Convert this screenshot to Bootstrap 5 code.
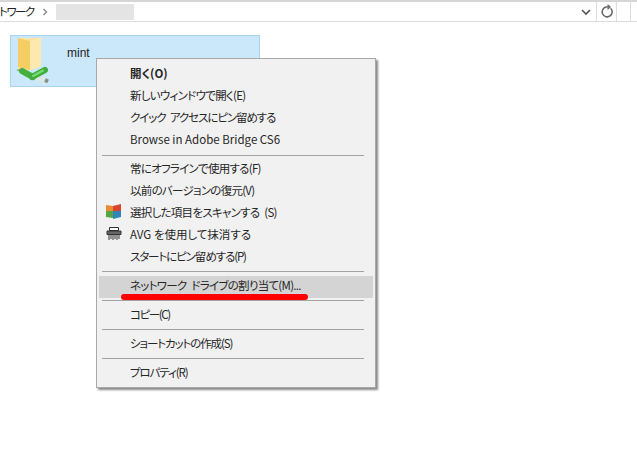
<!DOCTYPE html>
<html lang="ja">
<head>
<meta charset="utf-8">
<title>ネットワーク</title>
<link href="https://cdn.jsdelivr.net/npm/bootstrap@5.3.0/dist/css/bootstrap.min.css" rel="stylesheet">
<style>
html,body{height:100%;overflow:hidden;background:#fff;}
body{font-family:"Noto Sans CJK JP","Liberation Sans",sans-serif;font-feature-settings:"palt";font-size:12px;color:#222;position:relative;}
.addr-bar{height:22px;border-top:2px solid #d6d6d6;border-bottom:1px solid #dcdcdc;}
.crumb-text{margin-left:-1px;font-size:11.5px;letter-spacing:-1.5px;line-height:1;color:#222;}
.crumb-sep{margin:0 7px 0 8px;line-height:0;}
.crumb-mask{width:78px;height:16px;background:#e4e4e4;}
.addr-end{width:21px;border-left:1px solid #dcdcdc;border-right:1px solid #dcdcdc;}
.addr-tail{width:13px;}
.addr-next{width:7px;border-left:1px solid #dcdcdc;}
.chev{width:16px;margin-right:0;line-height:0;}
.tile{width:250px;height:52px;margin:13px 0 0 10px;background:#cbe8fb;border:1px solid #a9d3ee;}
.tile-ico{width:46px;margin-left:5px;line-height:0;}
.tile-name{margin:-16px 0 0 5px;font-family:"Liberation Sans",sans-serif;font-size:12px;color:#222;line-height:1;}
.ctx{position:absolute;left:96px;top:58px;width:280px;height:330px;background:#f1f1f1;border:1px solid #a8a8a8;box-shadow:2px 2px 2px #8a8a8a;padding:3px 2px;}
.ctx-item{height:22px;padding-left:31px;line-height:22px;white-space:nowrap;color:#262626;font-size:11.5px;position:relative;word-spacing:3px;}
.ctx-item b{font-weight:700;}
.ctx-latin{word-spacing:0;}
.ctx-snug{letter-spacing:-.72px;}
.ctx-kana{letter-spacing:-1.1px;}
.ctx-kana2{letter-spacing:-1.4px;}
.ctx-rule{height:1px;background:#a2a2a2;margin:4px 9px 2px 3px;}
.ctx-first{margin:5px 9px 1px 3px;}
.ctx-before-hot{margin:4px 9px 4px 3px;}
.ctx-after-hot{margin:2px 9px 2px 3px;}
.ctx-hot{background:#d4d4d4;line-height:19px;}
.ctx-ico{position:absolute;left:7px;top:3px;line-height:0;letter-spacing:0;}
.red-mark{position:absolute;left:121px;top:294px;width:187px;height:6px;border-radius:3px;background:#f00;}
</style>
</head>
<body>
<div class="addr-bar d-flex align-items-center">
  <span class="crumb-text">トワーク</span>
  <span class="crumb-sep"><svg width="7" height="8" viewBox="0 0 7 8"><path d="M1.5 1l3 3-3 3" fill="none" stroke="#8a8a8a" stroke-width="1.4"/></svg></span>
  <span class="crumb-mask"></span>
  <span class="flex-grow-1"></span>
  <span class="chev"><svg width="12" height="8" viewBox="0 0 12 8"><path d="M2 2l4 4 4-4" fill="none" stroke="#555" stroke-width="1.6"/></svg></span>
  <span class="addr-end h-100 d-flex align-items-center justify-content-center"><svg width="14" height="15" viewBox="0 0 14 15"><path d="M10.600 4.200A5 5 0 1 1 6 3H9" fill="none" stroke="#666" stroke-width="1.5"/><path d="M7.500 .8 10 3 7.500 5.200" fill="none" stroke="#666" stroke-width="1.3"/></svg></span>
  <span class="addr-tail"></span>
  <span class="addr-next h-100"></span>
</div>
<div class="tile d-flex align-items-center">
  <span class="tile-ico"><svg width="46" height="46" viewBox="0 0 46 46">
    <path d="M2 0h23v28l-10 4H2z" fill="#fbe3a2"/>
    <path d="M2 0l12 3v29l-12-3z" fill="#f6cd63"/>
    <path d="M14 3l11-3v28l-11 4z" fill="#fde9b0"/>
    <path d="M17 38l13 5" stroke="#dfe6e2" stroke-width="5" stroke-linecap="round"/>
    <path d="M29 42l3 1.500" stroke="#7f8f8a" stroke-width="4"/>
    <path d="M1 32l5 .5" stroke="#8fb89a" stroke-width="2"/>
    <path d="M6 33l11 6" stroke="#45b03f" stroke-width="6" stroke-linecap="round"/>
    <path d="M16 39l13-7" stroke="#3fae3d" stroke-width="6" stroke-linecap="round"/>
    <path d="M17 38l10-5.500" stroke="#79dc6e" stroke-width="2" stroke-linecap="round"/>
  </svg></span>
  <span class="tile-name">mint</span>
</div>
<div class="ctx">
  <div class="ctx-item"><b>開く(O)</b></div>
  <div class="ctx-item ctx-snug">新しいウィンドウで開く(E)</div>
  <div class="ctx-item ctx-kana">クイック アクセスにピン留めする</div>
  <div class="ctx-item ctx-latin">Browse in Adobe Bridge CS6</div>
  <div class="ctx-rule ctx-first"></div>
  <div class="ctx-item ctx-snug">常にオフラインで使用する(F)</div>
  <div class="ctx-item ctx-snug">以前のバージョンの復元(V)</div>
  <div class="ctx-item ctx-snug"><span class="ctx-ico"><svg width="15" height="15" viewBox="0 0 15 15"><path d="M0 1l7 1v5H0z" fill="#ea8a34"/><path d="M7 2l8-2v7H7z" fill="#d8452c"/><path d="M0 7h7v7l-7-1z" fill="#55a544"/><path d="M7 7h8v6l-8 2z" fill="#2f86b8"/></svg></span>選択した項目をスキャンする (S)</div>
  <div class="ctx-item ctx-latin"><span class="ctx-ico"><svg width="16" height="16" viewBox="0 0 16 16"><path d="M3.500 1.500h9v3h-9z" fill="#fff" stroke="#333"/><path d="M1 5h14v3.500H1z" fill="#666" stroke="#333"/><path d="M3 9v5M5 9v4M7 9v5M9 9v4M11 9v5M13 9v4" stroke="#333"/></svg></span>AVG を使用して抹消する</div>
  <div class="ctx-item ctx-kana">スタートにピン留めする(P)</div>
  <div class="ctx-rule ctx-before-hot"></div>
  <div class="ctx-item ctx-hot ctx-snug">ネットワーク ドライブの割り当て(M)...</div>
  <div class="ctx-rule ctx-after-hot"></div>
  <div class="ctx-item ctx-kana2">コピー(C)</div>
  <div class="ctx-rule"></div>
  <div class="ctx-item ctx-kana">ショートカットの作成(S)</div>
  <div class="ctx-rule"></div>
  <div class="ctx-item ctx-kana">プロパティ(R)</div>
</div>
<div class="red-mark"></div>
<script src="https://cdn.jsdelivr.net/npm/bootstrap@5.3.0/dist/js/bootstrap.bundle.min.js"></script>
</body>
</html>
